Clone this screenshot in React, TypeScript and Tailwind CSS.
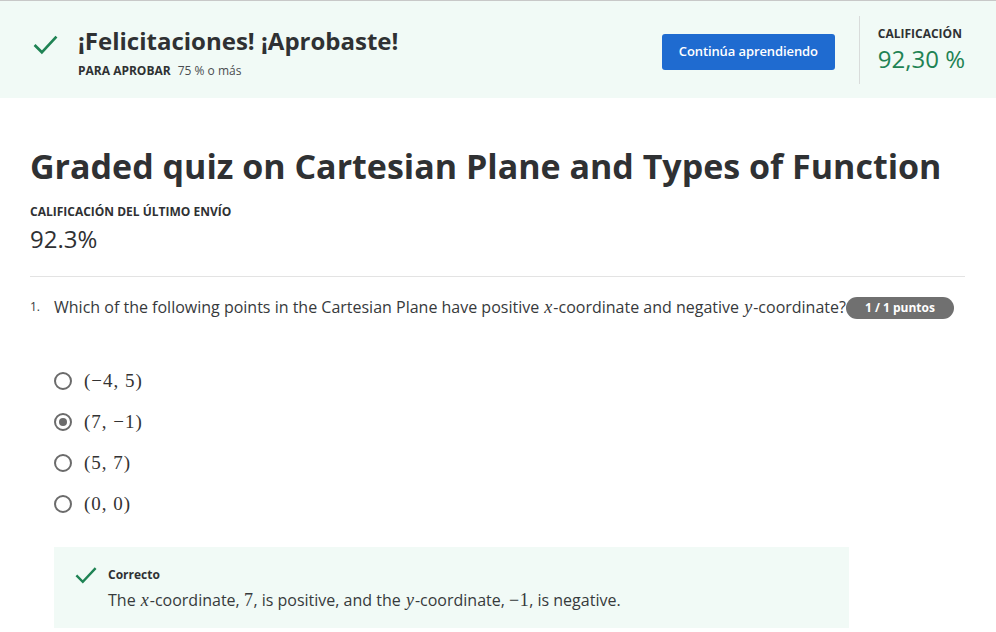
import React from 'react';

const Check = ({ className }: { className?: string }) => (
  <svg viewBox="0 0 24 24" className={className} fill="none">
    <path d="M1.5 12.5 L8.5 19.5 L22.5 4.5" stroke="#1f8354" strokeWidth="2.6" />
  </svg>
);

const M = ({ children }: { children: React.ReactNode }) => (
  <span className="font-['Liberation_Serif',serif] text-[18px] tracking-[0.5px]">{children}</span>
);
const V = ({ children }: { children: React.ReactNode }) => (
  <span className="font-['Liberation_Serif',serif] italic text-[18px] px-[1px]">{children}</span>
);

const options = [
  { label: '(−4, 5)', selected: false },
  { label: '(7, −1)', selected: true },
  { label: '(5, 7)', selected: false },
  { label: '(0, 0)', selected: false },
];

export default function App() {
  return (
    <div className="w-[996px] h-[632px] overflow-hidden bg-white font-['Open_Sans',sans-serif] text-[#373a3c]">
      {/* Banner */}
      <div className="border-t border-[#c8c8c8] bg-[#f1faf6] h-[98px] flex items-start pl-[33px] pr-[31px]">
        <Check className="w-[25px] h-[25px] mt-[31px] shrink-0" />
        <div className="ml-[20px] mt-[24px]">
          <div className="text-[24px] font-bold leading-[32px] text-[#2f3133]">¡Felicitaciones! ¡Aprobaste!</div>
          <div className="mt-[6px] flex items-center gap-[7px] text-[12px] leading-[16px]">
            <span className="font-bold text-[#2f3133]">PARA APROBAR</span>
            <span className="text-[#4a4d50]">75 % o más</span>
          </div>
        </div>
        <div className="ml-auto mt-[33px]">
          <button className="h-[36px] w-[173px] rounded-[3px] bg-[#1f6bd0] text-white text-[13px] font-semibold tracking-[-0.1px]">
            Continúa aprendiendo
          </button>
        </div>
        <div className="ml-[24px] mt-[15px] h-[68px] border-l border-[#d9dcdb] pl-[18px] pt-[9px]">
          <div className="text-[12px] font-bold leading-[17px] text-[#2f3133]">CALIFICACIÓN</div>
          <div className="text-[24px] leading-[33px] text-[#1f8354]">92,30 %</div>
        </div>
      </div>

      {/* Main */}
      <div className="px-[30px]">
        <h1 className="mt-[46px] text-[34px] font-bold leading-[44px] text-[#2f3133]">
          Graded quiz on Cartesian Plane and Types of Function
        </h1>
        <div className="mt-[16px] text-[12px] font-bold leading-[16px] text-[#2f3133]">CALIFICACIÓN DEL ÚLTIMO ENVÍO</div>
        <div className="mt-[4px] text-[24px] leading-[30px] text-[#2f3133]">92.3%</div>
        <div className="mt-[22px] border-t border-[#e3e3e3] w-[935px]" />

        <div className="mt-[19px] flex items-start">
          <span className="w-[24px] text-[12px] leading-[22px] text-[#373a3c]">1.</span>
          <div className="text-[16px] leading-[22px] text-[#373a3c]">
            Which of the following points in the Cartesian Plane have positive <V>x</V>-coordinate and negative <V>y</V>-coordinate?
            <span className="inline-flex align-[1px] items-center justify-center h-[22px] px-[19px] rounded-full bg-[#707070] text-white text-[12px] font-bold">
              1 / 1 puntos
            </span>
          </div>
        </div>

        <div className="mt-[50px] ml-[24px] flex flex-col gap-[17px]">
          {options.map((o) => (
            <div key={o.label} className="flex items-center h-[24px]">
              <span className="w-[18px] h-[18px] rounded-full border-2 border-[#6b6b6b] flex items-center justify-center">
                {o.selected && <span className="w-[8px] h-[8px] rounded-full bg-[#6b6b6b]" />}
              </span>
              <span className="ml-[12px] text-[19px] tracking-[1px] text-[#333] font-['Liberation_Serif',serif]">{o.label}</span>
            </div>
          ))}
        </div>

        <div className="mt-[31px] ml-[24px] w-[795px] h-[81px] bg-[#f1faf6] pl-[21px] pt-[17px]">
          <div className="flex items-center">
            <Check className="w-[22px] h-[22px] shrink-0" />
            <span className="ml-[11px] text-[12px] font-bold text-[#2f3133]">Correcto</span>
          </div>
          <div className="ml-[33px] mt-[3px] text-[16px] leading-[22px] text-[#373a3c]">
            The <V>x</V>-coordinate, <M>7</M>, is positive, and the <V>y</V>-coordinate, <M>−1</M>, is negative.
          </div>
        </div>
      </div>
    </div>
  );
}
